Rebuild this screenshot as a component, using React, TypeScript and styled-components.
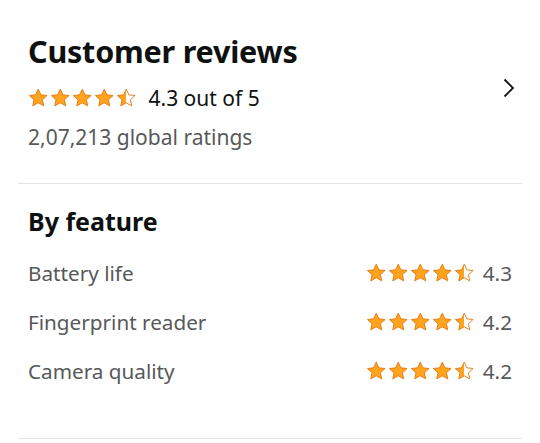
import React, { useId } from "react";
import styled, { createGlobalStyle } from "styled-components";

const Global = createGlobalStyle`
  html, body { margin: 0; padding: 0; background: #fff; }
  body { font-family: "Noto Sans", "Open Sans", Arial, sans-serif; color: #0f1111; }
`;

const Page = styled.div`
  padding: 0 18px;
  width: 540px;
  box-sizing: border-box;
`;

const Section = styled.section<{ $top: number; $bottom: number }>`
  padding: ${(p) => p.$top}px 10px ${(p) => p.$bottom}px;
  border-bottom: 1px solid #e3e3e3;
`;

const HeaderRow = styled.div`
  display: flex;
  align-items: flex-start;
  justify-content: space-between;
`;

const Title = styled.h2`
  margin: 0;
  font-size: 30.5px;
  line-height: 36px;
  font-weight: 700;
  color: #0f1111;
  letter-spacing: -0.2px;
`;

const SubTitle = styled.h3`
  margin: 0;
  font-size: 25px;
  line-height: 32px;
  font-weight: 700;
  color: #0f1111;
`;

const RatingLine = styled.div`
  display: flex;
  align-items: center;
  gap: 12px;
  margin-top: 16px;
  font-size: 21px;
  line-height: 26px;
  color: #0f1111;
`;

const GlobalCount = styled.div`
  margin-top: 12px;
  font-size: 21px;
  line-height: 28px;
  color: #565959;
`;

const Chevron = styled.div`
  margin-top: 45px;
  margin-right: -4px;
  display: flex;
`;

const FeatureList = styled.div`
  display: flex;
  flex-direction: column;
  gap: 21px;
  margin-top: 22px;
`;

const FeatureRow = styled.div`
  display: flex;
  align-items: center;
  justify-content: space-between;
  font-size: 20.7px;
  line-height: 28px;
  color: #565959;
`;

const RightGroup = styled.div`
  display: flex;
  align-items: center;
  gap: 8px;
`;

const StarRow = styled.div`
  display: flex;
  gap: 1.5px;
`;

function Star({ fill }: { fill: number }) {
  const id = useId().replace(/:/g, "");
  return (
    <svg width="20.5" height="20" viewBox="0 0 24 23">
      <defs>
        <linearGradient id={id} x1="0" x2="1" y1="0" y2="0">
          <stop offset={fill} stopColor="#FFA41C" />
          <stop offset={fill} stopColor="#ffffff" />
        </linearGradient>
      </defs>
      <path
        d="M12 1.2l3.1 6.6 7.2.8-5.4 4.9 1.5 7.2L12 17.1l-6.4 3.6 1.5-7.2-5.4-4.9 7.2-.8z"
        fill={`url(#${id})`}
        stroke="#E47911"
        strokeWidth="1.1"
        strokeLinejoin="round"
      />
    </svg>
  );
}

function Stars({ value }: { value: number }) {
  const fills = [0, 1, 2, 3, 4].map((i) => {
    const f = Math.max(0, Math.min(1, value - i));
    return f >= 0.95 ? 1 : f > 0.05 ? 0.5 : 0;
  });
  return (
    <StarRow>
      {fills.map((f, i) => (
        <Star key={i} fill={f} />
      ))}
    </StarRow>
  );
}

const features = [
  { name: "Battery life", value: 4.3 },
  { name: "Fingerprint reader", value: 4.2 },
  { name: "Camera quality", value: 4.2 },
];

export default function App() {
  return (
    <>
      <Global />
      <Page>
        <Section $top={33} $bottom={32}>
          <HeaderRow>
            <div>
              <Title>Customer reviews</Title>
              <RatingLine>
                <Stars value={4.3} />
                <span>4.3 out of 5</span>
              </RatingLine>
              <GlobalCount>2,07,213 global ratings</GlobalCount>
            </div>
            <Chevron>
              <svg width="14" height="20" viewBox="0 0 14 20">
                <path d="M2.5 1.5l8.5 8.5-8.5 8.5" fill="none" stroke="#0f1111" strokeWidth="1.8" />
              </svg>
            </Chevron>
          </HeaderRow>
        </Section>
        <Section $top={21} $bottom={53}>
          <SubTitle>By feature</SubTitle>
          <FeatureList>
            {features.map((f) => (
              <FeatureRow key={f.name}>
                <span>{f.name}</span>
                <RightGroup>
                  <Stars value={f.value} />
                  <span>{f.value.toFixed(1)}</span>
                </RightGroup>
              </FeatureRow>
            ))}
          </FeatureList>
        </Section>
      </Page>
    </>
  );
}
